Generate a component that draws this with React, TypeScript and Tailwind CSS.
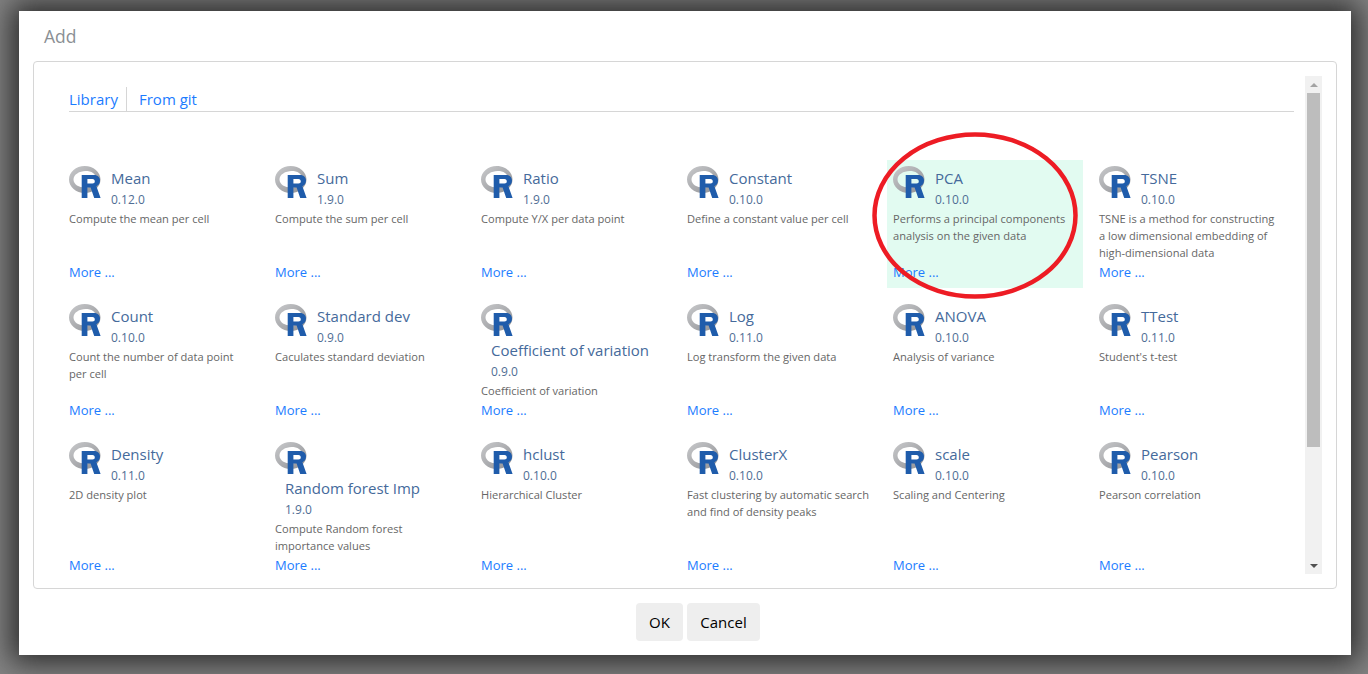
const items = [
  { name: 'Mean', version: '0.12.0', desc: 'Compute the mean per cell' },
  { name: 'Sum', version: '1.9.0', desc: 'Compute the sum per cell' },
  { name: 'Ratio', version: '1.9.0', desc: 'Compute Y/X per data point' },
  { name: 'Constant', version: '0.10.0', desc: 'Define a constant value per cell' },
  { name: 'PCA', version: '0.10.0', desc: 'Performs a principal components analysis on the given data', active: true },
  { name: 'TSNE', version: '0.10.0', desc: 'TSNE is a method for constructing a low dimensional embedding of high-dimensional data' },
  { name: 'Count', version: '0.10.0', desc: 'Count the number of data point per cell' },
  { name: 'Standard dev', version: '0.9.0', desc: 'Caculates standard deviation' },
  { name: 'Coefficient of variation', version: '0.9.0', desc: 'Coefficient of variation' },
  { name: 'Log', version: '0.11.0', desc: 'Log transform the given data' },
  { name: 'ANOVA', version: '0.10.0', desc: 'Analysis of variance' },
  { name: 'TTest', version: '0.11.0', desc: "Student's t-test" },
  { name: 'Density', version: '0.11.0', desc: '2D density plot' },
  { name: 'Random forest Imp', version: '1.9.0', desc: 'Compute Random forest importance values' },
  { name: 'hclust', version: '0.10.0', desc: 'Hierarchical Cluster' },
  { name: 'ClusterX', version: '0.10.0', desc: 'Fast clustering by automatic search and find of density peaks' },
  { name: 'scale', version: '0.10.0', desc: 'Scaling and Centering' },
  { name: 'Pearson', version: '0.10.0', desc: 'Pearson correlation' },
];

function RLogo() {
  return (
    <svg width="32" height="32" viewBox="0 0 32 32" className="shrink-0">
      <defs>
        <linearGradient id="ring" x1="0" y1="0" x2="1" y2="1">
          <stop offset="0" stopColor="#c9cacc" />
          <stop offset="1" stopColor="#8f9094" />
        </linearGradient>
      </defs>
      <path
        fillRule="evenodd"
        fill="url(#ring)"
        d="M0 13.5C0 6 7 0 15.7 0S31.5 6 31.5 13.5 24.4 27 15.7 27 0 21 0 13.5ZM4.5 13.5C4.5 18.5 10 21.5 16 21.5S27 18.5 27 13S22.5 5 16.5 5 4.5 8.5 4.5 13.5Z"
      />
      <path
        fillRule="evenodd"
        fill="#1f5cab"
        d="M12.7 9H25C29 9 31 11.5 31 14.8 31 17.5 29.5 19.4 27.4 20.2L31.6 32H25.2L21.6 21.4H18.4V32H12.7ZM18.4 13V17.6H23.4C25 17.6 25.8 16.6 25.8 15.3 25.8 14 25 13 23.4 13Z"
      />
    </svg>
  );
}

function ItemCard({ name, version, desc, active }: { name: string; version: string; desc: string; active?: boolean }) {
  return (
    <div className={`flex min-h-[128px] flex-col pb-[6px] pl-[6px] pr-[13px] pt-[6px] ${active ? 'bg-[#e2fbf1]' : ''}`}>
      <div className="flex flex-wrap items-start">
        <div className="h-[34px]">
          <RLogo />
        </div>
        <div className="ml-[10px] pt-[2px]">
          <div className="text-[15px] leading-[21px] text-[#456a9b]">{name}</div>
          <div className="text-[12px] leading-[21px] text-[#4f6d94]">{version}</div>
        </div>
      </div>
      <div className="-mr-[7px] text-[11.1px] leading-[17px] text-[#666666]">{desc}</div>
      <a className="mb-[1px] mt-auto pt-[2px] text-[13px] leading-[18px] text-[#1c7cff]">More ...</a>
    </div>
  );
}

export default function App() {
  return (
    <div className="relative h-[674px] overflow-hidden bg-[#858585] pl-[19px] pr-[17px] pt-[11px] pb-[19px] font-['Open_Sans',sans-serif]">
      <div className="flex h-full flex-col bg-white shadow-[0_0_28px_8px_#2a2a2a]">
        <div className="px-[25px] pt-[14px] text-[17.5px] leading-[23px] text-[#8b8f94]">Add</div>
        <div className="mx-[14px] mt-[13px] flex h-[528px] rounded-[4px] border border-[#d6d6d6] py-[14px] pl-[35px] pr-[14px]">
          <div className="min-w-0 flex-1 overflow-hidden pr-[11px]">
            <div className="mt-[11px] flex h-[25px] border-b border-[#d6d6d6] text-[15px] leading-[24px] text-[#1c7cff]">
              <div className="w-[58px] border-r border-[#d6d6d6]">Library</div>
              <div className="pl-[12px]">From git</div>
            </div>
            <div className="-ml-[6px] mt-[48px] grid w-[1226px] grid-cols-6 gap-[10px]">
              {items.map((item) => (
                <ItemCard key={item.name} {...item} />
              ))}
            </div>
          </div>
          <div className="relative flex w-[17px] shrink-0 flex-col items-center bg-[#f1f1f1]">
            <div className="flex h-[17px] items-center justify-center">
              <div className="h-0 w-0 border-x-[4px] border-b-[4px] border-x-transparent border-b-[#a3a3a3]" />
            </div>
            <div className="h-[354px] w-[13px] bg-[#bdbdbd]" />
            <div className="mt-auto flex h-[17px] items-center justify-center">
              <div className="h-0 w-0 border-x-[4px] border-t-[4px] border-x-transparent border-t-[#505050]" />
            </div>
          </div>
        </div>
        <div className="mt-[14px] flex justify-center gap-[4px] pl-[26px]">
          <button className="h-[38px] w-[47px] rounded-[4px] bg-[#eeeeee] text-[15px] text-black">OK</button>
          <button className="h-[38px] w-[73px] rounded-[4px] bg-[#eeeeee] text-[15px] text-black">Cancel</button>
        </div>
      </div>
      <svg className="absolute left-[872px] top-[132px]" width="206" height="167" viewBox="0 0 206 167">
        <ellipse cx="103" cy="83.5" rx="100.5" ry="81" fill="none" stroke="#ed1c24" strokeWidth="4.5" />
      </svg>
    </div>
  );
}
